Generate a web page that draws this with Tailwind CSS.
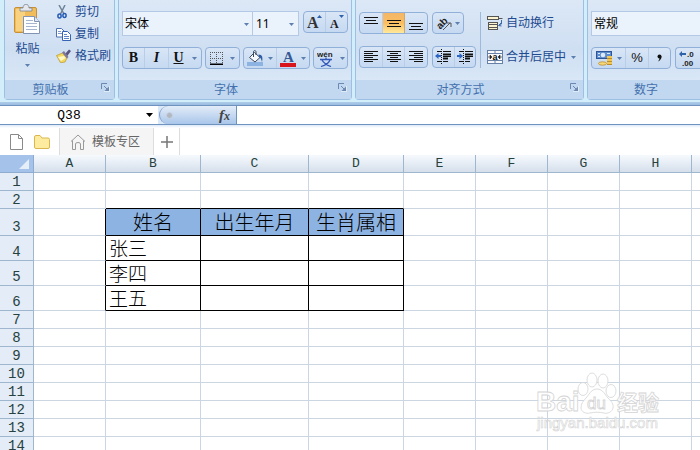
<!DOCTYPE html>
<html lang="zh-CN">
<head>
  <meta charset="UTF-8" />
  <title>模板专区</title>
  <meta name="viewport" content="width=device-width, initial-scale=1.0" />
  <script src="https://cdn.jsdelivr.net/npm/@tailwindcss/browser@4"></script>
</head>
<body class="h-screen flex flex-col overflow-hidden bg-white text-black text-xs font-['Liberation_Sans','Noto_Sans_CJK_SC',sans-serif]">

  <!-- shared icons -->
  <svg class="hidden">
    <symbol id="caret" viewBox="0 0 5 3"><path d="M0 0h5L2.5 3z" fill="#5c7fb0" /></symbol>
    <symbol id="launcher" viewBox="0 0 9 9">
      <path d="M.5 6V.5H6" fill="none" stroke="#6d88b0" />
      <path d="M3 3l3 3" stroke="#6d88b0" /><path d="M8 3.5V8H3.5z" fill="#6d88b0" />
      <path d="M8.500 3v5.500H3" fill="none" stroke="#fff" stroke-width=".5" />
    </symbol>
  </svg>

  <!-- Ribbon -->
  <header class="flex shrink-0 gap-[3px] h-[102px] pl-1 pb-[2px] overflow-hidden bg-[#d3eefb] text-[#1e4a90]">

    <!-- Clipboard -->
    <section class="flex flex-col shrink-0 w-[111px] border border-t-0 border-[#9dbfe2] rounded-b bg-linear-to-b from-[#dce8f6] via-[#cfdff2] to-[#dfecf9]">
      <div class="flex h-20 pl-[9px] gap-4">
        <button class="flex flex-col items-center pt-1 w-[27px]">
          <svg class="w-[27px] h-[31px]" viewBox="0 0 27 31">
            <rect x=".5" y="3.500" width="22" height="25" rx="1.500" fill="#f0bd5a" stroke="#c98f35" />
            <rect x="2" y="5" width="9" height="22" fill="#f8d181" />
            <path d="M6 7V4h3c0-5 6-5 6 0h3v3z" fill="#e4e8ee" stroke="#7c8794" stroke-width=".8" />
            <path d="M9.500 12.500h11l5 5v12h-16z" fill="#fdfeff" stroke="#8194b3" />
            <path d="M20.500 12.500v5h5" fill="#dce6f5" stroke="#8194b3" />
            <path d="M12 16.500h7M12 19.500h11M12 22.500h11M12 25.500h11" stroke="#a5b5d0" />
          </svg>
          <span class="leading-4 mt-[6px] whitespace-nowrap">粘贴</span>
          <svg class="w-[5px] h-[3px] mt-[7px]"><use href="#caret" /></svg>
        </button>
        <div class="flex flex-col items-start pt-[1px]">
          <button class="flex items-center gap-1 h-[22px] whitespace-nowrap">
            <svg class="w-[14px] h-[14px]" viewBox="0 0 14 14">
              <path d="M2 0l5 9M8 0L3.500 9" stroke="#6f8298" stroke-width="1.500" />
              <ellipse cx="2.500" cy="11" rx="1.600" ry="2" fill="none" stroke="#2559b5" stroke-width="1.500" />
              <ellipse cx="7.500" cy="10.500" rx="1.600" ry="2" fill="none" stroke="#2559b5" stroke-width="1.500" />
            </svg>剪切</button>
          <button class="flex items-center gap-1 h-[22px] whitespace-nowrap">
            <svg class="w-[15px] h-[14px] -ml-px" viewBox="0 0 15 14">
              <path d="M.5 1.500h5l2.500 2.500v6H.5z" fill="#fff" stroke="#4c72b5" />
              <path d="M2 4.500h3M2 6.500h4" stroke="#7b99cf" />
              <path d="M6.500 4.500h5l3 3v6h-8z" fill="#fff" stroke="#3564b5" />
              <path d="M8 7.500h3M8 9.500h5M8 11.500h5" stroke="#5d85ca" />
            </svg>复制</button>
          <button class="flex items-center gap-1 h-[22px] whitespace-nowrap">
            <svg class="w-[15px] h-[14px] -ml-px" viewBox="0 0 15 14">
              <path d="M8.500 5.500L13 .5 15 2l-4.500 6z" fill="#5a5580" />
              <path d="M.5 6.500L6.500 4l4.500 5-2 4-4.500.8z" fill="#f2d861" stroke="#ba952e" stroke-width=".7" />
              <path d="M2 8l6-1 1.500 2-4.500 3z" fill="#fff8c8" />
              <path d="M6 3.500l2-1.500L12.500 8l-1.500 1.500z" fill="#7e789c" />
            </svg>格式刷</button>
        </div>
      </div>
      <div class="relative flex items-center justify-center h-[19px] pr-[18px] bg-[#c1d8f0] text-[#4470ad]">剪贴板
        <button aria-label="剪贴板选项" class="absolute right-1 top-[3px]"><svg class="w-[9px] h-[9px]"><use href="#launcher" /></svg></button>
      </div>
    </section>

    <!-- Font -->
    <section class="flex flex-col shrink-0 w-[234px] border border-t-0 border-[#9dbfe2] rounded-b bg-linear-to-b from-[#dce8f6] via-[#cfdff2] to-[#dfecf9]">
      <div class="flex flex-col h-20 pt-[11px] px-[3px] gap-[11px]">
        <div class="flex gap-1 h-[25px]">
          <div class="relative flex w-[177px] bg-[#eaf2fb] border border-[#b3c9e6] text-black">
            <select aria-label="字体" class="w-[130px] appearance-none pl-[2px] border-r border-[#b3c9e6]"><option>宋体</option></select>
            <select aria-label="字号" class="flex-1 appearance-none pl-[3px] text-xs font-['Noto_Sans']"><option>11</option></select>
            <svg class="absolute left-[121px] top-[11px] w-[5px] h-[3px]"><use href="#caret" /></svg>
            <svg class="absolute right-1 top-[11px] w-[5px] h-[3px]"><use href="#caret" /></svg>
          </div>
          <div class="flex h-[22px] w-[45px] border border-[#91b0d9] rounded-sm bg-linear-to-b from-[#d9e6f6] to-[#c5d9f1]">
            <button aria-label="增大字号" class="flex flex-1 justify-center border-r border-[#b9cde9]">
              <svg class="w-[18px] h-5" viewBox="0 0 18 20"><text x="1" y="16" font-family="Liberation Serif" font-size="16" font-weight="bold" fill="#333">A</text><path d="M11 6l2.500-3L16 6z" fill="#2e62ab" /></svg>
            </button>
            <button aria-label="减小字号" class="flex flex-1 justify-center">
              <svg class="w-[18px] h-5" viewBox="0 0 18 20"><text x="2" y="16" font-family="Liberation Serif" font-size="12" font-weight="bold" fill="#222">A</text><path d="M11 3l2.500 3L16 3z" fill="#2e62ab" /></svg>
            </button>
          </div>
        </div>
        <div class="flex justify-between h-[22px] text-[#111]">
          <div class="flex w-20 border border-[#91b0d9] rounded-sm bg-linear-to-b from-[#d9e6f6] to-[#c5d9f1] font-['Liberation_Serif'] text-sm leading-5">
            <button class="w-[22px] font-bold border-r border-[#b9cde9]">B</button>
            <button class="w-[24px] font-bold italic border-r border-[#b9cde9]">I</button>
            <button class="flex flex-1 items-center justify-center gap-2 font-bold underline">U<svg class="w-[5px] h-[3px]"><use href="#caret" /></svg></button>
          </div>
          <button aria-label="边框" class="flex items-center justify-center gap-[7px] w-[35px] border border-[#91b0d9] rounded-sm bg-linear-to-b from-[#d9e6f6] to-[#c5d9f1]">
            <svg class="w-[13px] h-[13px]" viewBox="0 0 13 13"><path d="M.5 0v12M6.500 0v12M12.500 0v12M0 .5h13M0 6.500h13" stroke="#555" stroke-dasharray="1 1" /><path d="M0 12.500h13" stroke="#000" stroke-width="2" /></svg>
            <svg class="w-[5px] h-[3px]"><use href="#caret" /></svg>
          </button>
          <div class="flex w-[67px] border border-[#91b0d9] rounded-sm bg-linear-to-b from-[#d9e6f6] to-[#c5d9f1]">
            <button aria-label="填充颜色" class="flex flex-1 items-center justify-center gap-1 border-r border-[#b9cde9]">
              <svg class="w-[17px] h-4" viewBox="0 0 17 16"><rect y="12" width="16" height="4" fill="#8db3e2" /><path d="M7.500 2.500l5.500 5L8 12 2.500 7.500z" fill="#f5f8fc" stroke="#3c4a60" /><path d="M6.500 7V2c0-2 2.500-2 2.500 0v3" fill="none" stroke="#3c4a60" /><path d="M11.500 4.500c4 0 4.500 3 3.500 7.500-1-3-1-4-3-5z" fill="#2e5ca6" /></svg>
              <svg class="w-[5px] h-[3px]"><use href="#caret" /></svg>
            </button>
            <button aria-label="字体颜色" class="flex flex-1 items-center justify-center gap-1">
              <svg class="w-[17px] h-[18px]" viewBox="0 0 17 18"><text x="3" y="13" font-family="Liberation Serif" font-size="15" font-weight="bold" fill="#365a94">A</text><rect y="14" width="16" height="4" fill="#d8141c" /></svg>
              <svg class="w-[5px] h-[3px]"><use href="#caret" /></svg>
            </button>
          </div>
          <button aria-label="拼音" class="flex items-center justify-center gap-[5px] w-[35px] border border-[#91b0d9] rounded-sm bg-linear-to-b from-[#d9e6f6] to-[#c5d9f1]">
            <svg class="w-[18px] h-[18px]" viewBox="0 0 18 18"><text x="0" y="8" font-family="Liberation Sans" font-size="8" font-weight="bold" fill="#222">wén</text><path d="M3 10.500h12M9 8.500v2M5 11c1.500 3 4.500 5 9 6.500M13 11c-1 3-4 5-9 6.500" fill="none" stroke="#3458b8" stroke-width="1.300" /></svg>
            <svg class="w-[5px] h-[3px]"><use href="#caret" /></svg>
          </button>
        </div>
      </div>
      <div class="relative flex items-center justify-center h-[19px] pr-[18px] bg-[#c1d8f0] text-[#4470ad]">字体
        <button aria-label="字体选项" class="absolute right-1 top-[3px]"><svg class="w-[9px] h-[9px]"><use href="#launcher" /></svg></button>
      </div>
    </section>

    <!-- Alignment -->
    <section class="flex flex-col shrink-0 w-[229px] border border-t-0 border-[#9dbfe2] rounded-b bg-linear-to-b from-[#dce8f6] via-[#cfdff2] to-[#dfecf9]">
      <div class="flex h-20 pt-3 pl-[3px]">
        <div class="flex flex-col gap-3 w-[117px]">
          <div class="flex gap-1 h-[22px]">
            <div class="flex w-[69px] border border-[#91b0d9] rounded-sm bg-linear-to-b from-[#d9e6f6] to-[#c5d9f1]">
              <button aria-label="顶端对齐" class="flex flex-1 justify-center border-r border-[#b9cde9]"><svg class="w-[14px] h-5" viewBox="0 0 14 20"><path d="M0 4.500h14M2 7.500h10M0 10.500h14" stroke="#111" /></svg></button>
              <button aria-label="垂直居中" class="flex flex-1 justify-center bg-linear-to-b from-[#f3b668] via-[#fbbd5f] to-[#ffe99a] border-r border-[#d0a868]"><svg class="w-[14px] h-5" viewBox="0 0 14 20"><path d="M0 7.500h14M2 10.500h10M0 13.500h14" stroke="#111" /></svg></button>
              <button aria-label="底端对齐" class="flex flex-1 justify-center"><svg class="w-[14px] h-5" viewBox="0 0 14 20"><path d="M0 10.500h14M2 13.500h10M0 16.500h14" stroke="#111" /></svg></button>
            </div>
            <button aria-label="方向" class="flex items-center justify-center gap-[2px] w-[32px] border border-[#91b0d9] rounded-sm bg-linear-to-b from-[#d9e6f6] to-[#c5d9f1]">
              <svg class="w-[17px] h-[17px]" viewBox="0 0 17 17"><text x="1" y="11" font-family="Liberation Sans" font-size="10" font-weight="bold" fill="#222" transform="rotate(-45 7 9)">ab</text><path d="M7 15l7-7M11 8h4v4" fill="none" stroke="#555" /></svg>
              <svg class="w-[5px] h-[3px]"><use href="#caret" /></svg>
            </button>
          </div>
          <div class="flex gap-1 h-[22px]">
            <div class="flex w-[69px] border border-[#91b0d9] rounded-sm bg-linear-to-b from-[#d9e6f6] to-[#c5d9f1]">
              <button aria-label="左对齐" class="flex flex-1 justify-center border-r border-[#b9cde9]"><svg class="w-[14px] h-5" viewBox="0 0 14 20"><path d="M0 4.500h14M0 6.500h9M0 8.500h14M0 10.500h9M0 12.500h14M0 14.500h9" stroke="#111" /></svg></button>
              <button aria-label="居中" class="flex flex-1 justify-center border-r border-[#b9cde9]"><svg class="w-[14px] h-5" viewBox="0 0 14 20"><path d="M0 4.500h14M3 6.500h8M0 8.500h14M3 10.500h8M0 12.500h14M3 14.500h8" stroke="#111" /></svg></button>
              <button aria-label="右对齐" class="flex flex-1 justify-center"><svg class="w-[14px] h-5" viewBox="0 0 14 20"><path d="M0 4.500h14M5 6.500h9M0 8.500h14M5 10.500h9M0 12.500h14M5 14.500h9" stroke="#111" /></svg></button>
            </div>
            <div class="flex w-[44px] border border-[#91b0d9] rounded-sm bg-linear-to-b from-[#d9e6f6] to-[#c5d9f1]">
              <button aria-label="减少缩进" class="flex flex-1 justify-center border-r border-[#b9cde9]"><svg class="w-4 h-5" viewBox="0 0 16 20"><path d="M2 4.500h4M8 4.500h8M2 14.500h4M8 14.500h5" stroke="#111" /><path d="M8 7.500h8M8 11.500h5" stroke="#111" stroke-width="2" /><path d="M8 9.500h8" stroke="#111" /><path d="M6.500 2v15" stroke="#111" stroke-dasharray="1 1" /><path d="M0 9l3.500-3v2H6v2H3.500v2z" fill="#2e66c4" /></svg></button>
              <button aria-label="增加缩进" class="flex flex-1 justify-center"><svg class="w-4 h-5" viewBox="0 0 16 20"><path d="M2 4.500h4M8 4.500h8M2 14.500h4M8 14.500h5" stroke="#111" /><path d="M8 7.500h8M8 11.500h5" stroke="#111" stroke-width="2" /><path d="M8 9.500h8" stroke="#111" /><path d="M6.500 2v15" stroke="#111" stroke-dasharray="1 1" /><path d="M6 9L2.500 6v2H0v2h2.500v2z" fill="#2e66c4" /></svg></button>
            </div>
          </div>
        </div>
        <div class="flex flex-col items-start gap-3 h-[56px] ml-1 pl-[6px] border-l border-[#9dbadc]">
          <button class="flex items-center gap-[3px] h-[22px] whitespace-nowrap">
            <svg class="w-4 h-4" viewBox="0 0 16 16"><rect x=".5" y="1.500" width="11" height="3" fill="#fbf3cf" stroke="#555" /><path d="M11 3.500h4.500" stroke="#555" /><rect x="1.500" y="7.500" width="9" height="7" fill="#fbf3cf" stroke="#555" /><path d="M2 9.500h8M2 12.500h8" stroke="#555" /><path d="M14.500 5v4l-2 1.500M14 8l-2.500 2.500 3 .5" fill="none" stroke="#3c68ac" /></svg>自动换行</button>
          <button class="flex items-center gap-[3px] h-[22px] whitespace-nowrap">
            <svg class="w-4 h-4" viewBox="0 0 16 16"><rect x=".5" y="1.500" width="15" height="13" fill="#f8fafd" stroke="#6680a6" /><path d="M0 4.500h16M0 11.500h16M8 1v3M8 12v3" stroke="#6680a6" /><path d="M1 8h3M15 8h-3M3 6v4l2-2zM13 6v4l-2-2z" stroke="#222" stroke-width=".6" fill="#222" /><text x="5.500" y="10.500" font-family="Liberation Sans" font-size="9" font-weight="bold" fill="#111">a</text></svg>合并后居中
            <svg class="w-[5px] h-[3px] ml-[2px]"><use href="#caret" /></svg></button>
        </div>
      </div>
      <div class="relative flex items-center justify-center h-[19px] pr-[18px] bg-[#c1d8f0] text-[#4470ad]">对齐方式
        <button aria-label="对齐选项" class="absolute right-1 top-[3px]"><svg class="w-[9px] h-[9px]"><use href="#launcher" /></svg></button>
      </div>
    </section>

    <!-- Number -->
    <section class="flex flex-col flex-1 min-w-0 border-x border-b border-r-0 border-[#9dbfe2] rounded-bl bg-linear-to-b from-[#dce8f6] via-[#cfdff2] to-[#dfecf9]">
      <div class="flex flex-col h-20 pt-[11px] pl-[3px] gap-[11px]">
        <select aria-label="数字格式" class="appearance-none h-[25px] pl-[2px] bg-[#eaf2fb] border border-r-0 border-[#b3c9e6] text-black"><option>常规</option></select>
        <div class="flex gap-1 h-[22px] text-[#111]">
          <div class="flex shrink-0 w-20 border border-[#91b0d9] rounded-sm bg-linear-to-b from-[#d9e6f6] to-[#c5d9f1]">
            <button aria-label="会计数字格式" class="flex items-center justify-center gap-1 w-[34px] border-r border-[#b9cde9]">
              <svg class="w-[17px] h-4" viewBox="0 0 17 16"><rect x=".5" y="1.500" width="15" height="7" fill="#5f8ccb" stroke="#2d5599" /><circle cx="7" cy="5" r="2.300" fill="#dce9f8" /><path d="M2 3.500h2M2 6.500h2M11 3.500h3" stroke="#dce9f8" /><path d="M11 6h5v9h-5z" fill="#f3c552" /><path d="M11 8.500h5M11 11.500h5M11 14.500h5" stroke="#b98d2c" /><ellipse cx="6.500" cy="13.500" rx="4" ry="1.700" fill="#f7d878" stroke="#b98d2c" stroke-width=".8" /></svg>
              <svg class="w-[5px] h-[3px]"><use href="#caret" /></svg>
            </button>
            <button class="w-[23px] text-[13px] border-r border-[#b9cde9]">%</button>
            <button aria-label="千位分隔" class="flex flex-1 items-center justify-center"><svg class="w-[5px] h-[8px]" viewBox="0 0 5 8"><circle cx="2.500" cy="2.500" r="2" fill="#111" /><path d="M4.500 2.500C4.500 5 3 6.500 1 7.500 2.500 5.500 2.500 5 2.500 3.500z" fill="#111" /></svg></button>
          </div>
          <button aria-label="增加小数位" class="flex flex-1 items-center pl-[3px] border border-r-0 border-[#91b0d9] rounded-l-sm bg-linear-to-b from-[#d9e6f6] to-[#c5d9f1]">
            <svg class="w-[17px] h-[18px] shrink-0" viewBox="0 0 17 18"><text x="8" y="8" font-family="Liberation Sans" font-size="8" font-weight="bold" fill="#222">.0</text><text x="3" y="17" font-family="Liberation Sans" font-size="8" font-weight="bold" fill="#222">.00</text><path d="M0 5l3-3v2h4v2H3v2z" fill="#2e62ab" /></svg>
          </button>
        </div>
      </div>
      <div class="flex items-center h-[19px] pl-[46px] bg-[#c1d8f0] text-[#4470ad]">数字</div>
    </section>
  </header>

  <!-- Formula bar -->
  <div class="shrink-0 h-[3px] bg-linear-to-b from-[#aecdea] to-[#9bbbe0]"></div>
  <div class="flex shrink-0 h-5 border-y border-[#6f93bf] bg-[#dbe8f7]">
    <div class="relative w-[158px] bg-white">
      <input aria-label="名称框" value="Q38" class="w-full h-full pr-5 text-center text-[13px] font-['Liberation_Mono']" />
      <svg class="absolute right-[5px] top-[7px] w-[7px] h-1" viewBox="0 0 7 4"><path d="M0 0h7L3.500 4z" /></svg>
    </div>
    <div class="flex items-center justify-between w-[77px] pl-[6px] pr-[6px] ml-px rounded-l-full border-l border-[#7e9fc9] bg-linear-to-b from-[#e3ecf8] to-[#a9c6ea]">
      <span class="size-[7px] rounded-full bg-[#b0b8c4] border border-[#c9d3e0]"></span>
      <button class="font-['Liberation_Serif'] font-bold italic text-[15px] leading-4 text-[#444]">f<span class="text-[12px]">x</span></button>
    </div>
    <input aria-label="编辑栏" class="flex-1 min-w-0 bg-white border-l border-[#6f93bf]" />
  </div>
  <div class="shrink-0 h-[3px] bg-linear-to-b from-[#dce9f7] to-white"></div>

  <!-- Tab strip -->
  <nav class="flex shrink-0 h-[27px] text-[#666]">
    <div class="flex items-center gap-[11px] w-[60px] pl-[10px] border-r border-[#ddd]">
      <button aria-label="新建"><svg class="w-[13px] h-4 block" viewBox="0 0 13 16"><path d="M.5.5h8l4 4v11H.5zM8.500.5v4h4" fill="#fff" stroke="#8a8a8a" /></svg></button>
      <button aria-label="打开"><svg class="w-4 h-[14px] block" viewBox="0 0 16 14"><path d="M.5 12V2Q.5.5 2 .5h4l2 2.500h6q1.500 0 1.500 1.500V12q0 1.500-1.500 1.500H2Q.5 13.500.5 12z" fill="#fdeca0" stroke="#d9b74e" /></svg></button>
    </div>
    <a href="#" class="flex items-center gap-[6px] w-[94px] pl-[10px] bg-[#f5f5f5] border-r border-[#ddd] whitespace-nowrap">
      <svg class="w-4 h-4" viewBox="0 0 16 16"><path d="M1 7.500L8 1l7 6.500M2.500 6.500v9h3V10q0-1.500 2.500-1.500t2.500 1.500v5.500h3v-9" fill="none" stroke="#999" /></svg>模板专区</a>
    <button aria-label="新标签" class="flex items-center justify-center w-[26px] border-r border-[#ddd]"><svg class="w-3 h-3" viewBox="0 0 12 12"><path d="M0 6h12M6 0v12" stroke="#777" stroke-width="1.500" /></svg></button>
  </nav>

  <!-- Sheet -->
  <main class="relative flex-1 min-h-0 overflow-hidden">
    <table class="w-[calc(100%+1px)] table-fixed border-separate border-spacing-0">
      <colgroup>
        <col class="w-[34px]" /><col class="w-[72px]" /><col class="w-[95px]" /><col class="w-[108px]" /><col class="w-[95px]" />
        <col class="w-[72px]" /><col class="w-[72px]" /><col class="w-[72px]" /><col class="w-[72px]" /><col />
      </colgroup>
      <thead id="sheetHead"></thead>
      <tbody id="sheetBody"></tbody>
    </table>

    <!-- Watermark -->
    <svg class="absolute right-[36px] bottom-[14px] w-[128px] h-[66px] pointer-events-none" viewBox="0 0 128 66" fill="#fff" fill-opacity=".9" stroke="#d4d4d4" stroke-width=".8">
      <text x="0" y="41" font-family="Liberation Sans" font-size="28" font-weight="bold">Bai</text>
      <ellipse cx="47" cy="19" rx="5" ry="6.500" /><ellipse cx="56" cy="10" rx="5" ry="7" /><ellipse cx="67" cy="11" rx="5" ry="7" /><ellipse cx="75" cy="21" rx="5" ry="6.500" />
      <path d="M61 19c6 0 8 6 11 9s6 6 5 10-5 6-9 5-10-1-14 0-9-1-9-5 2-7 5-10 5-9 11-9z" />
      <text x="51" y="39" font-family="Liberation Sans" font-size="17">du</text>
      <text x="81" y="40" font-family="Noto Sans CJK SC" font-size="21" font-weight="bold">经验</text>
      <text x="1" y="58" font-family="Liberation Sans" font-size="15" stroke-width=".6">jingyan.baidu.com</text>
    </svg>
  </main>

  <script>
    const columns = ["A", "B", "C", "D", "E", "F", "G", "H", ""];
    const cells = {
      B3: "姓名", C3: "出生年月", D3: "生肖属相",
      B4: "张三", B5: "李四", B6: "王五"
    };
    const heights = { 3: "h-[27px]", 4: "h-[25px]", 5: "h-[25px]", 6: "h-[25px]" };

    document.getElementById("sheetHead").innerHTML = `
      <tr class="h-[18px] font-['Liberation_Mono'] text-[13px] leading-4 text-[#27413e]">
        <td class="p-0 bg-[#a5c3ea] border-r border-b border-[#8fabd0]">
          <svg class="block ml-auto mr-1 w-[10px] h-[10px]" viewBox="0 0 10 10"><path d="M10 0v10H0z" fill="#e6eef8" /></svg>
        </td>
        ${columns.map((c) => `<th scope="col" class="p-0 font-normal border-r border-b border-[#9eb6ce] bg-linear-to-b from-[#f6fafe] to-[#d5dfeb]">${c}</th>`).join("")}
      </tr>`;

    let rows = "";
    for (let r = 1; r <= 14; r++) {
      rows += `<tr class="${heights[r] || "h-[18px]"}">
        <th scope="row" class="p-0 align-bottom font-normal font-['Liberation_Mono'] text-[14px] leading-4 text-[#27413e] bg-[#e3ecf7] border-r border-b border-[#9eb6ce]">${r}</th>`;
      columns.forEach((c, i) => {
        const boxed = r >= 3 && r <= 6;
        const right = boxed && i <= 3 ? "border-r-black" : "border-r-[#ccd6e2]";
        const bottom = r >= 2 && r <= 6 && i >= 1 && i <= 3 ? "border-b-black" : "border-b-[#ccd6e2]";
        const look = r === 3 && i >= 1 && i <= 3 ? "bg-[#8db3e2] text-center text-[20px] leading-6" : "pl-[3px] text-[19px] leading-6";
        const text = cells[c + r] || "";
        rows += `<td class="p-0 font-light font-['Noto_Sans_CJK_SC'] whitespace-nowrap border-r border-b ${right} ${bottom} ${look}">${text}</td>`;
      });
      rows += "</tr>";
    }
    document.getElementById("sheetBody").innerHTML = rows;
  </script>
</body>
</html>
